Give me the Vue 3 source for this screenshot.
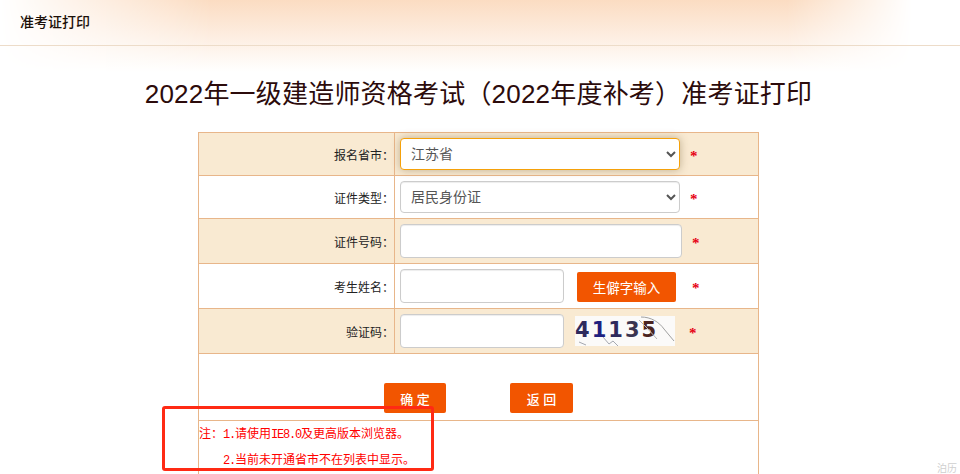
<script setup>
import { ref } from 'vue'

const province = ref('江苏省')
const idType = ref('居民身份证')
const idNumber = ref('')
const realName = ref('')
const captcha = ref('')
</script>

<template>
  <div class="page">
    <div class="glow"></div>
    <header class="top">准考证打印</header>
    <div class="main">
      <h1 class="title">2022年一级建造师资格考试（2022年度补考）准考证打印</h1>
      <table class="form">
        <colgroup>
          <col class="col-label" />
          <col />
        </colgroup>
        <tbody>
          <tr class="shade short">
            <td class="label">报名省市：</td>
            <td>
              <div class="field">
                <select v-model="province" class="ctl select focus">
                  <option>江苏省</option>
                </select>
                <span class="star s1">*</span>
              </div>
            </td>
          </tr>
          <tr class="short">
            <td class="label">证件类型：</td>
            <td>
              <div class="field">
                <select v-model="idType" class="ctl select">
                  <option>居民身份证</option>
                </select>
                <span class="star s1">*</span>
              </div>
            </td>
          </tr>
          <tr class="shade">
            <td class="label">证件号码：</td>
            <td>
              <div class="field">
                <input v-model="idNumber" class="ctl wide" />
                <span class="star s1">*</span>
              </div>
            </td>
          </tr>
          <tr>
            <td class="label">考生姓名：</td>
            <td>
              <div class="field">
                <input v-model="realName" class="ctl narrow" />
                <button class="btn rare">生僻字输入</button>
                <span class="star s2">*</span>
              </div>
            </td>
          </tr>
          <tr class="shade">
            <td class="label">验证码：</td>
            <td>
              <div class="field">
                <input v-model="captcha" class="ctl narrow" />
                <div class="captcha">
                  <span class="digits"><i>4</i><i class="blue">1</i><i>1</i><i class="dim">3</i><i class="brown">5</i></span>
                  <svg class="noise" width="100" height="30" viewBox="0 0 100 30">
                    <path d="M66 1 C76 1 84 6 89 13 L99 25" fill="none" stroke="#a0a0a0" stroke-width="1" />
                    <path d="M64 4 L72 12 L82 23" fill="none" stroke="#b5b5b5" stroke-width="1" />
                    <path d="M4 26 L11 29 M28 21 L34 28 L38 25 L43 30" fill="none" stroke="#a5a8b0" stroke-width="1" />
                  </svg>
                </div>
                <span class="star s3">*</span>
              </div>
            </td>
          </tr>
          <tr class="actions">
            <td colspan="2">
              <div class="btns">
                <button class="btn act first">确 定</button>
                <button class="btn act">返 回</button>
              </div>
            </td>
          </tr>
          <tr class="notes">
            <td colspan="2">
              <p>注：<span class="lat">1.</span>请使用<span class="lat">IE8.0</span>及更高版本浏览器。</p>
              <p class="second"><span class="lat">2.</span>当前未开通省市不在列表中显示。</p>
            </td>
          </tr>
        </tbody>
      </table>
    </div>
    <div class="mark"></div>
    <span class="stamp">泊历</span>
  </div>
</template>

<style scoped>
.page {
  position: relative;
  width: 960px;
  height: 474px;
  overflow: hidden;
  background: #fff;
  font-family: "Liberation Sans", "Noto Sans CJK SC", sans-serif;
}

.glow {
  position: absolute;
  left: 0;
  top: 0;
  width: 960px;
  height: 72px;
  background: linear-gradient(to bottom, #fbdcc2, #fff);
  -webkit-mask-image: linear-gradient(to right, transparent 0, #000 22%, #000 82%, transparent 95%);
  mask-image: linear-gradient(to right, transparent 0, #000 22%, #000 82%, transparent 95%);
}

.top {
  position: relative;
  height: 45px;
  line-height: 45px;
  padding-left: 20px;
  border-bottom: 1px solid #eddcc9;
  font-size: 14px;
  font-weight: 500;
  color: #1c1008;
}

.main {
  position: relative;
  width: 957px;
}

.title {
  margin: 0;
  height: 86px;
  line-height: 96px;
  text-align: center;
  font-size: 26px;
  font-weight: 400;
  letter-spacing: 0.2px;
  color: #2c0b0b;
}

.form {
  width: 561px;
  margin: 0 auto;
  border-collapse: collapse;
  table-layout: fixed;
}

.col-label {
  width: 196px;
}

.form td {
  border: 1px solid #e8b68a;
  padding: 0 0 0 5px;
  height: 45px;
  box-sizing: border-box;
}

.short td {
  height: 43px;
}

.shade td {
  background: #f9ead2;
}

.form .label {
  text-align: right;
  padding: 0;
  font-size: 12px;
  color: #222;
}

.field {
  display: flex;
  align-items: center;
}

.ctl {
  box-sizing: border-box;
  border: 1px solid #ccc;
  border-radius: 4px;
  background: #fff;
  font-family: inherit;
  font-size: 14px;
  color: #555;
  box-shadow: inset 0 1px 1px rgba(0, 0, 0, 0.075);
  outline: none;
}

.select {
  width: 280px;
  height: 32px;
  padding: 0 6px;
}

.focus {
  border-color: #f5a10a;
  box-shadow: 0 0 8px rgba(120, 100, 60, 0.45);
}

.wide {
  width: 282px;
  height: 34px;
}

.narrow {
  width: 164px;
  height: 34px;
}

.btn {
  border: none;
  border-radius: 2px;
  background: #f25500;
  color: #fff;
  font-family: inherit;
  font-size: 13px;
  padding: 0;
}

.rare {
  width: 99px;
  height: 30px;
  margin: 2px 0 0 13px;
  font-size: 13.5px;
}

.captcha {
  position: relative;
  width: 100px;
  height: 30px;
  margin-left: 11px;
  background: #fbfaf9;
  overflow: hidden;
}

.digits {
  display: flex;
  gap: 2px;
  font-family: "DejaVu Sans", sans-serif;
  font-size: 21px;
  font-weight: 700;
  line-height: 28px;
  color: #2e2a5c;
}

.digits i {
  font-style: normal;
}

.digits .blue {
  color: #1f1f80;
}

.digits .dim {
  color: #3a3450;
}

.digits .brown {
  color: #4a2420;
}

.noise {
  position: absolute;
  left: 0;
  top: 0;
}

.star {
  color: #e60012;
  font-family: "Liberation Serif", serif;
  font-size: 15px;
  font-weight: 700;
  line-height: 15px;
  padding-top: 5px;
}

.s1 {
  margin-left: 10px;
}

.s2 {
  margin-left: 16px;
}

.s3 {
  margin-left: 14px;
}

.form .actions td {
  height: 67px;
  padding: 0;
}

.btns {
  display: flex;
  justify-content: center;
  gap: 64px;
  padding-top: 29px;
  height: 66px;
  box-sizing: border-box;
}

.act {
  width: 63px;
  height: 30px;
  font-weight: 500;
}

.first {
  width: 62px;
}

.form .notes td {
  padding: 0;
  height: 70px;
  vertical-align: top;
  border-bottom: none;
}

.notes p {
  margin: 0;
  height: 26px;
  line-height: 26px;
  font-family: "Liberation Mono", "Noto Sans CJK SC", monospace;
  font-size: 12px;
  color: #f00;
  white-space: nowrap;
}

.notes p:first-child {
  margin-top: 1px;
}

.notes .second {
  padding-left: 24px;
}

.lat {
  letter-spacing: -1.2px;
}

.mark {
  position: absolute;
  left: 162px;
  top: 406px;
  width: 272px;
  height: 65px;
  box-sizing: border-box;
  border: 3px solid #ff2a14;
  border-radius: 3px;
}

.stamp {
  position: absolute;
  right: 3px;
  bottom: -1px;
  font-size: 10px;
  line-height: 12px;
  color: #cfcfcf;
}
</style>
